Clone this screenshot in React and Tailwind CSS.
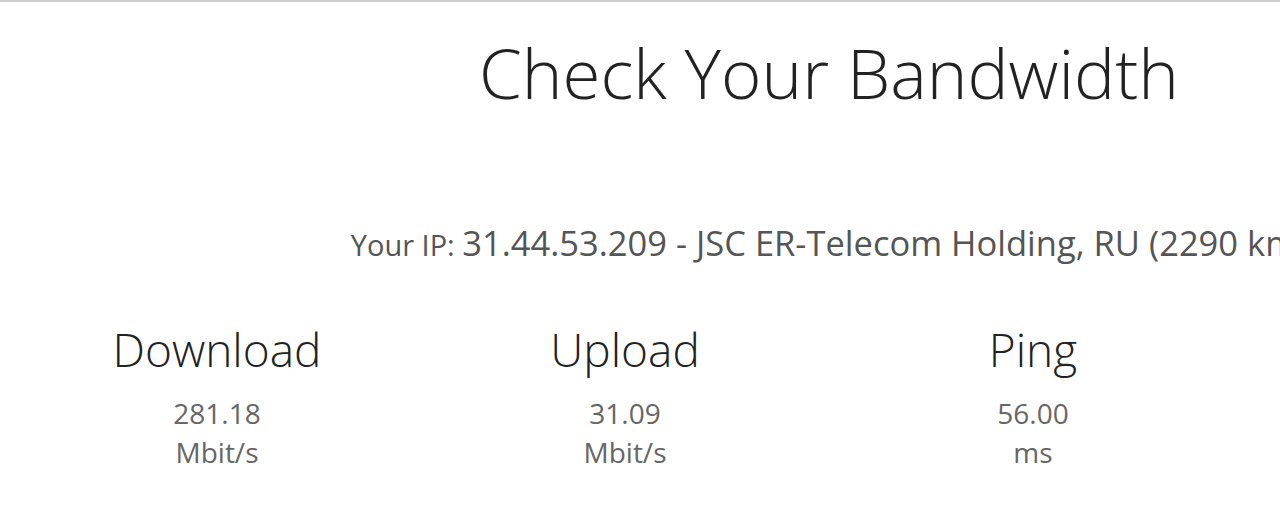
export default function App() {
  const results = [
    { label: "Download", value: "281.18", unit: "Mbit/s" },
    { label: "Upload", value: "31.09", unit: "Mbit/s" },
    { label: "Ping", value: "56.00", unit: "ms" },
  ];

  return (
    <div
      className="w-full h-[512px] overflow-hidden bg-white border-t-2 border-[#cfcfcf]"
      style={{ fontFamily: '"Open Sans", sans-serif' }}
    >
      <div className="w-[1632px] ml-[13px] flex flex-col items-center">
        <h1 className="mt-[22px] text-[69px] leading-[96px] font-light text-[#222] whitespace-nowrap">
          Check Your Bandwidth
        </h1>
        <div className="mt-[103px] whitespace-nowrap text-[#555] leading-[40px]">
          <span className="text-[29px]">Your IP: </span>
          <span className="text-[34.5px]">
            31.44.53.209 - JSC ER-Telecom Holding, RU (2290 km)
          </span>
        </div>
        <div className="mt-[47px] w-full grid grid-cols-4">
          {results.map((r) => (
            <div key={r.label} className="flex flex-col items-center">
              <div className="text-[46px] leading-[64px] font-light text-[#222]">
                {r.label}
              </div>
              <div className="mt-[13px] text-[28px] leading-[39px] text-[#666]">
                {r.value}
              </div>
              <div className="text-[28px] leading-[38px] text-[#666]">
                {r.unit}
              </div>
            </div>
          ))}
        </div>
      </div>
    </div>
  );
}
